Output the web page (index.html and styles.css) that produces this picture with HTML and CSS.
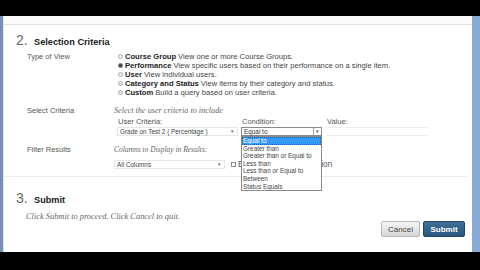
FILE: index.html
```html
<!DOCTYPE html>
<html lang="en">
<head>
    <meta charset="UTF-8">
    <title>Selection Criteria</title>
    <link rel="stylesheet" href="styles.css">
</head>
<body>
    <div class="screen">
        <div class="window">
            <div class="page">
                <div class="topbar"></div>

                <div class="step">
                    <div class="step-title"><span class="step-num">2.</span><span class="step-name">Selection Criteria</span></div>

                    <div class="field-row">
                        <div class="field-label">Type of View</div>
                        <ul class="radio-list">
                            <li><span class="radio"></span><b>Course Group</b> View one or more Course Groups.</li>
                            <li><span class="radio checked"></span><b>Performance</b> View specific users based on their performance on a single item.</li>
                            <li><span class="radio"></span><b>User</b> View individual users.</li>
                            <li><span class="radio"></span><b>Category and Status</b> View items by their category and status.</li>
                            <li><span class="radio"></span><b>Custom</b> Build a query based on user criteria.</li>
                        </ul>
                    </div>

                    <div class="field-row criteria-row">
                        <div class="field-label">Select Criteria</div>
                        <div>
                            <div class="hint hint-lg">Select the user criteria to include</div>
                            <div class="criteria">
                                <div class="col col-user">
                                    <div class="col-label">User Criteria:</div>
                                    <div class="select">Grade on Test 2 ( Percentage )<span class="arrow">&#9662;</span></div>
                                </div>
                                <div class="col col-cond">
                                    <div class="col-label">Condition:</div>
                                    <div class="select open">Equal to<span class="arrow-btn">&#9662;</span></div>
                                    <ul class="dropdown">
                                        <li class="selected">Equal to</li>
                                        <li>Greater than</li>
                                        <li>Greater than or Equal to</li>
                                        <li>Less than</li>
                                        <li>Less than or Equal to</li>
                                        <li>Between</li>
                                        <li>Status Equals</li>
                                    </ul>
                                </div>
                                <div class="col col-value">
                                    <div class="col-label">Value:</div>
                                    <div class="input"></div>
                                </div>
                            </div>
                        </div>
                    </div>

                    <div class="field-row filter-row">
                        <div class="field-label">Filter Results</div>
                        <div>
                            <div class="hint">Columns to Display in Results:</div>
                            <div class="columns">
                                <div class="select wide">All Columns<span class="arrow">&#9662;</span></div>
                                <span class="checkbox"></span>
                                <span class="check-label">Expand Column Selection</span>
                            </div>
                        </div>
                    </div>
                </div>

                <div class="step step-submit">
                    <div class="step-title"><span class="step-num">3.</span><span class="step-name">Submit</span></div>
                    <div class="submit-hint">Click Submit to proceed. Click Cancel to quit.</div>
                    <div class="buttons">
                        <button class="btn btn-cancel">Cancel</button>
                        <button class="btn btn-submit">Submit</button>
                    </div>
                </div>
            </div>
        </div>
    </div>
</body>
</html>
```

FILE: styles.css
```css
body {
    margin: 0;
    background-color: #000;
    font-family: "Liberation Sans", Arial, sans-serif;
    color: #555;
}

.screen {
    width: 480px;
    height: 270px;
    padding-top: 16px;
    box-sizing: border-box;
    overflow: hidden;
}

.window {
    height: 236px;
    display: flex;
    border-left: 3px solid #7590b4;
    border-right: 8px solid #86a9d6;
    background-color: #fff;
}

.page {
    flex: 1;
    border-left: 1px solid #e4e4e4;
}

.topbar {
    height: 8px;
    background-color: #fafafa;
    border-bottom: 1px solid #e3e3e3;
}

.step {
    padding-left: 12px;
    padding-bottom: 7px;
    border-bottom: 1px solid #ececec;
    margin-right: 4px;
}

.step-title {
    margin-top: 8px;
    height: 14px;
    display: flex;
    align-items: baseline;
}

.step-num {
    font-size: 14px;
    line-height: 14px;
    color: #666;
    width: 18px;
}

.step-name {
    font-size: 9.2px;
    font-weight: bold;
    color: #222;
}

.field-row {
    display: grid;
    grid-template-columns: 87px 1fr;
    padding-left: 11px;
    margin-top: 5px;
}

.field-label {
    font-size: 7.5px;
    line-height: 9px;
    color: #555;
}

.radio-list {
    list-style: none;
    margin: 0;
    padding: 0 0 0 4px;
}

.radio-list li {
    font-size: 7.6px;
    line-height: 9px;
    color: #444;
    white-space: nowrap;
    display: flex;
    align-items: center;
}

.radio-list b {
    color: #222;
    margin-right: 2px;
}

.radio {
    width: 3px;
    height: 3px;
    border: 1px solid #aaa;
    border-radius: 50%;
    background-color: #eee;
    margin-right: 2px;
}

.radio.checked {
    background-color: #444;
    border-color: #777;
}

.criteria-row {
    margin-top: 9px;
}

.hint {
    font-family: "Liberation Serif", "Times New Roman", serif;
    font-style: italic;
    font-size: 7.5px;
    line-height: 9px;
    color: #666;
}

.hint-lg {
    font-size: 8.2px;
}

.criteria {
    display: flex;
    gap: 3px;
    margin-top: 2px;
    margin-left: 3px;
}

.col {
    position: relative;
}

.col-user {
    width: 121px;
}

.col-cond {
    width: 81px;
}

.col-value {
    width: 102px;
    margin-left: 1px;
}

.col-label {
    font-size: 7.5px;
    line-height: 9px;
    color: #555;
    padding-left: 1px;
    margin-bottom: 1px;
}

.select {
    position: relative;
    height: 9px;
    box-sizing: border-box;
    border: 1px solid #e6e6e6;
    font-size: 6.4px;
    line-height: 7px;
    padding-left: 2px;
    color: #444;
    white-space: nowrap;
}

.arrow {
    position: absolute;
    right: 3px;
    top: 0;
    font-size: 5px;
    color: #666;
}

.select.open {
    border: 1px solid #8a8a8a;
    color: #333;
}

.arrow-btn {
    position: absolute;
    right: 0;
    top: 0;
    width: 7px;
    height: 7px;
    border-left: 1px solid #aaa;
    font-size: 5px;
    line-height: 7px;
    text-align: center;
    color: #444;
}

.dropdown {
    position: absolute;
    top: 100%;
    left: 0;
    width: 81px;
    margin: 0;
    padding: 0;
    list-style: none;
    box-sizing: border-box;
    border: 1px solid #8a8a8a;
    background-color: #fff;
    z-index: 2;
}

.dropdown li {
    font-size: 6.4px;
    line-height: 7.6px;
    padding-left: 1px;
    color: #444;
    white-space: nowrap;
}

.dropdown li.selected {
    background-color: #3399ff;
    color: #fff;
    outline: 1px dotted #1c5fa8;
    outline-offset: -1px;
}

.input {
    height: 9px;
    box-sizing: border-box;
    border-top: 1px solid #ededed;
    border-bottom: 1px solid #ededed;
}

.filter-row {
    margin-top: 9px;
}

.columns {
    display: flex;
    align-items: center;
    margin-top: 6px;
}

.select.wide {
    width: 111px;
}

.checkbox {
    width: 3px;
    height: 3px;
    border: 1px solid #888;
    margin-left: 6px;
}

.check-label {
    font-size: 8.2px;
    margin-left: 2px;
    color: #555;
}

.step-submit {
    border-bottom: none;
    padding-bottom: 0;
}

.step-submit .step-title {
    margin-top: 14px;
}

.submit-hint {
    font-family: "Liberation Serif", "Times New Roman", serif;
    font-style: italic;
    font-size: 8.4px;
    line-height: 9px;
    color: #666;
    margin-top: 7px;
    padding-left: 10px;
}

.buttons {
    display: flex;
    justify-content: flex-end;
    gap: 3px;
    padding-right: 3px;
}

.btn {
    height: 16px;
    padding: 0;
    border-radius: 2px;
    font-family: "Liberation Sans", Arial, sans-serif;
    font-size: 8px;
    cursor: pointer;
}

.btn-cancel {
    width: 39px;
    background: linear-gradient(#f6f6f6, #d6d6d6);
    border: 1px solid #b8b8b8;
    color: #444;
}

.btn-submit {
    width: 42px;
    background: linear-gradient(#3f6f98, #29577c);
    border: 1px solid #1f4566;
    color: #fff;
    font-weight: bold;
}
```
